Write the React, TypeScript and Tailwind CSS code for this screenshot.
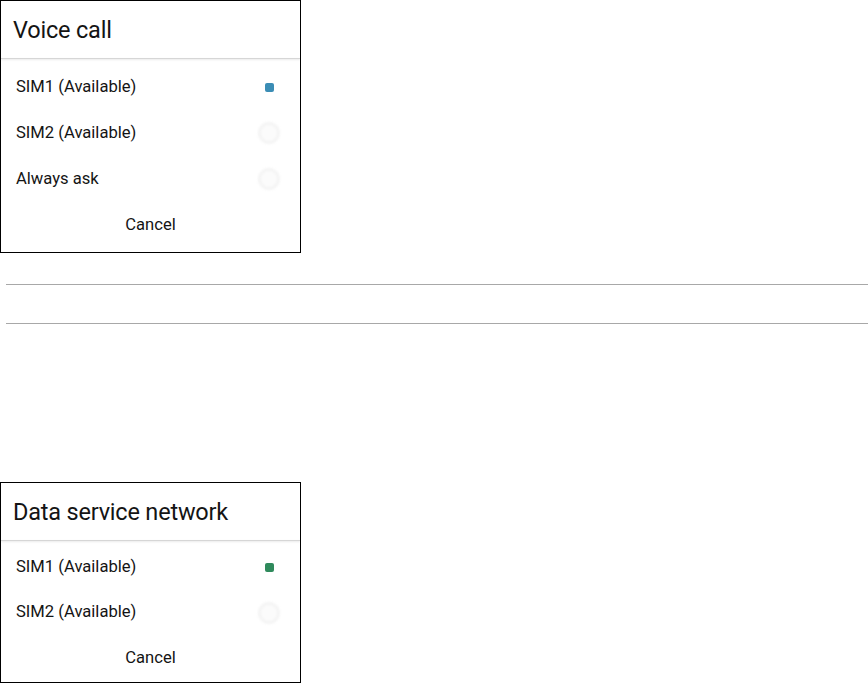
import React from "react";

type Option = { label: string; selected?: boolean };

function Radio({ selected, color }: { selected?: boolean; color: string }) {
  if (selected) {
    return (
      <div className="w-[22px] h-[22px] flex items-center justify-center">
        <div
          className={`w-[9px] h-[9px] rounded-[2px] blur-[0.6px] ${color}`}
        />
      </div>
    );
  }
  return (
    <div className="w-[22px] h-[22px] rounded-full border-[3px] border-[#f4f4f4] bg-[#fbfbfb] blur-[1.2px]" />
  );
}

function SimDialog({
  title,
  options,
  dotColor,
  rowH,
  listPad,
}: {
  title: string;
  options: Option[];
  dotColor: string;
  rowH: string;
  listPad: string;
}) {
  return (
    <div className="w-[301px] border border-black bg-white flex flex-col text-[#141414]">
      <div className="h-[57px] flex items-center pl-[12px] pt-[2px] text-[23.5px] tracking-[-0.2px]">
        {title}
      </div>
      <div className="h-px bg-[#d6d6d6] shadow-[0_1px_2px_rgba(0,0,0,0.12)]" />
      <div className={`flex flex-col ${listPad}`}>
        {options.map((o) => (
          <div
            key={o.label}
            className={`${rowH} flex items-center justify-between pl-[15px] pr-[20px] text-[16.6px]`}
          >
            <span>{o.label}</span>
            <Radio selected={o.selected} color={dotColor} />
          </div>
        ))}
        <div className="h-[46px] flex items-center justify-center text-[16.6px]">
          Cancel
        </div>
      </div>
    </div>
  );
}

export default function App() {
  return (
    <div
      className="w-[868px] h-[683px] bg-white flex flex-col"
      style={{ fontFamily: "Roboto, 'Liberation Sans', sans-serif" }}
    >
      <SimDialog
        title="Voice call"
        dotColor="bg-[#3b8db5]"
        rowH="h-[46px]"
        listPad="pt-[5px] pb-[4px]"
        options={[
          { label: "SIM1 (Available)", selected: true },
          { label: "SIM2 (Available)" },
          { label: "Always ask" },
        ]}
      />

      <div className="mt-[31px] ml-[6px] h-px bg-[#a8a8a8]" />
      <div className="mt-[38px] ml-[6px] h-px bg-[#a8a8a8]" />

      <div className="mt-[158px]">
        <SimDialog
          title="Data service network"
          dotColor="bg-[#2f8a5c]"
          rowH="h-[45px]"
          listPad="pt-[4px] pb-[1px]"
          options={[
            { label: "SIM1 (Available)", selected: true },
            { label: "SIM2 (Available)" },
          ]}
        />
      </div>
    </div>
  );
}
